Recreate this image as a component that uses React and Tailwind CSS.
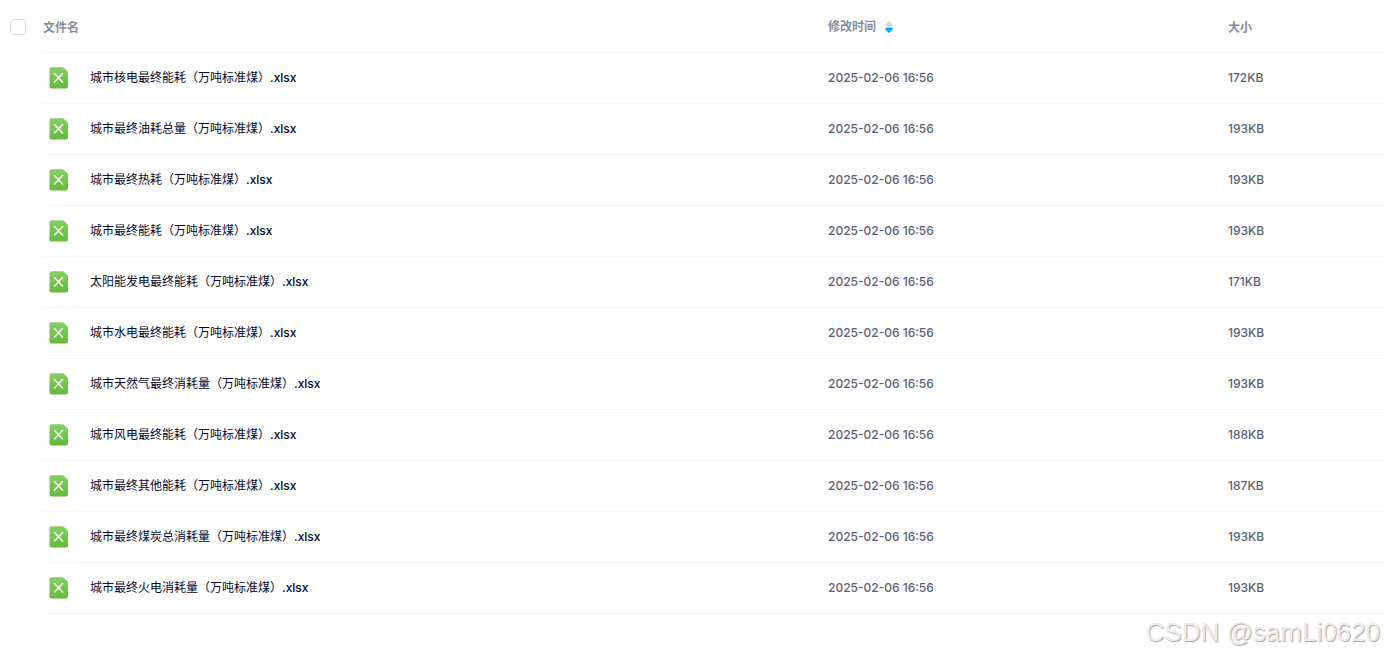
const files = [
  { name: "城市核电最终能耗（万吨标准煤）", size: "172KB" },
  { name: "城市最终油耗总量（万吨标准煤）", size: "193KB" },
  { name: "城市最终热耗（万吨标准煤）", size: "193KB" },
  { name: "城市最终能耗（万吨标准煤）", size: "193KB" },
  { name: "太阳能发电最终能耗（万吨标准煤）", size: "171KB" },
  { name: "城市水电最终能耗（万吨标准煤）", size: "193KB" },
  { name: "城市天然气最终消耗量（万吨标准煤）", size: "193KB" },
  { name: "城市风电最终能耗（万吨标准煤）", size: "188KB" },
  { name: "城市最终其他能耗（万吨标准煤）", size: "187KB" },
  { name: "城市最终煤炭总消耗量（万吨标准煤）", size: "193KB" },
  { name: "城市最终火电消耗量（万吨标准煤）", size: "193KB" },
];
const modified = "2025-02-06 16:56";

function SheetIcon() {
  return (
    <svg width="20" height="22" viewBox="0 0 20 22" aria-hidden="true" className="shrink-0">
      <defs>
        <linearGradient id="sheet" x1="0" y1="0" x2="0" y2="1">
          <stop offset="0" stopColor="#86cf66" />
          <stop offset="1" stopColor="#66b93c" />
        </linearGradient>
      </defs>
      <path
        d="M3 .3h10.600a2 2 0 0 1 1.400.6l3.400 3.400a2 2 0 0 1 .6 1.400V19.500a2 2 0 0 1-2 2H2.500a2 2 0 0 1-2-2V2.300a2 2 0 0 1 2-2z"
        fill="url(#sheet)"
      />
      <path d="M5.500 6.500l8 8.500M13.500 6.500l-8 8.500" stroke="#f4fbf0" strokeWidth="1.600" strokeLinecap="round" />
    </svg>
  );
}

function SortIcon() {
  return (
    <svg width="8" height="12" viewBox="0 0 8 12" aria-hidden="true">
      <path d="M3.300.5a1 1 0 0 1 1.400 0L7.500 3.500c.5.700.2 1.900-.7 1.900H1.200C.3 5.400 0 4.200.5 3.500z" fill="#d3d5dd" />
      <path d="M3.300 11.500a1 1 0 0 0 1.400 0L7.500 8.500c.5-.7.2-2.100-.7-2.100H1.200c-.9 0-1.200 1.400-.7 2.100z" fill="#06a7ff" />
    </svg>
  );
}

export default function App() {
  return (
    <main className="relative min-h-screen bg-white font-['Inter','Noto_Sans_CJK_SC',sans-serif] text-xs">
      <table className="w-full table-fixed border-separate border-spacing-0 text-left">
        <colgroup>
          <col className="w-[43px]" />
          <col />
          <col className="w-[400px]" />
          <col className="w-[156px]" />
        </colgroup>
        <thead className="text-[#878c9c]">
          <tr className="h-[53px]">
            <td className="p-0">
              <input
                type="checkbox"
                aria-label="全选"
                className="ml-[10px] block size-4 appearance-none rounded border border-[#d9d9e6] bg-white checked:bg-[#06a7ff]"
              />
            </td>
            <th className="border-b border-[#f7f7f9] p-0 pt-1 font-bold">文件名</th>
            <th className="border-b border-[#f7f7f9] p-0 pt-0.5 font-bold" aria-sort="descending">
              <button type="button" className="flex items-center gap-[9px] font-bold">
                修改时间
                <SortIcon />
              </button>
            </th>
            <th className="border-b border-[#f7f7f9] p-0 pt-1 font-bold">大小</th>
          </tr>
        </thead>
        <tbody className="font-medium text-[#596275]">
          {files.map((file) => (
            <tr key={file.name} className="h-[51px]">
              <td className="p-0" />
              <td className="border-b border-[#f7f7f9] p-0">
                <a href="#" className="flex items-center gap-[21px] pl-[6px] text-[#03082c]">
                  <SheetIcon />
                  <span className="truncate">
                    <span className="font-normal">{file.name}</span>.xlsx
                  </span>
                </a>
              </td>
              <td className="border-b border-[#f7f7f9] p-0">{modified}</td>
              <td className="border-b border-[#f7f7f9] p-0">{file.size}</td>
            </tr>
          ))}
        </tbody>
      </table>
      <p className="absolute right-1 bottom-2 font-['Liberation_Sans',sans-serif] text-[26px] leading-8 text-[#ececec] [text-shadow:1px_1px_1px_#a8a8a8]">
        CSDN @samLi0620
      </p>
    </main>
  );
}
